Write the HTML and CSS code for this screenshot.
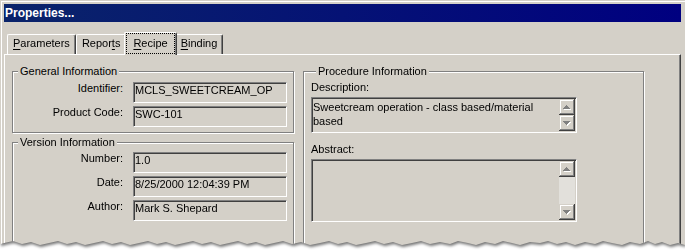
FILE: index.html
```html
<!DOCTYPE html>
<html>
<head>
<meta charset="utf-8">
<title>Properties</title>
<link rel="stylesheet" href="styles.css">
</head>
<body>
<div class="shot">
  <div class="window">
    <div class="titlebar">Properties...</div>
    <div class="tabs">
      <div class="tab"><u>P</u>arameters</div>
      <div class="tab">Repor<u>t</u>s</div>
      <div class="tab active"><span class="focus"><u>R</u>ecipe</span></div>
      <div class="tab"><u>B</u>inding</div>
    </div>
    <div class="panel">
      <div class="col-left">
        <fieldset class="group general">
          <legend>General Information</legend>
          <div class="fields">
            <div class="label">Identifier:</div>
            <div class="field">MCLS_SWEETCREAM_OP</div>
            <div class="label">Product Code:</div>
            <div class="field">SWC-101</div>
          </div>
        </fieldset>
        <fieldset class="group version">
          <legend>Version Information</legend>
          <div class="fields">
            <div class="label">Number:</div>
            <div class="field">1.0</div>
            <div class="label">Date:</div>
            <div class="field">8/25/2000 12:04:39 PM</div>
            <div class="label">Author:</div>
            <div class="field">Mark S. Shepard</div>
          </div>
        </fieldset>
      </div>
      <fieldset class="group procedure">
        <legend>Procedure Information</legend>
        <div class="caption">Description:</div>
        <div class="memo memo-desc">
          <div class="memo-text">Sweetcream operation - class based/material based</div>
          <div class="scrollbar">
            <div class="sbtn"><svg width="8" height="5" viewBox="0 0 8 5" shape-rendering="crispEdges"><path transform="translate(1 1)" fill="#fff" d="M3 0h1v1h1v1h1v1h1v1H0V3h1V2h1V1h1z"/><path fill="#808080" d="M3 0h1v1h1v1h1v1h1v1H0V3h1V2h1V1h1z"/></svg></div>
            <div class="sbtn"><svg width="8" height="5" viewBox="0 0 8 5" shape-rendering="crispEdges"><path transform="translate(1 1)" fill="#fff" d="M0 0h7v1H6v1H5v1H4v1H3V3H2V2H1V1H0z"/><path fill="#808080" d="M0 0h7v1H6v1H5v1H4v1H3V3H2V2H1V1H0z"/></svg></div>
          </div>
        </div>
        <div class="caption caption-gap">Abstract:</div>
        <div class="memo memo-abstract">
          <div class="memo-text"></div>
          <div class="scrollbar">
            <div class="sbtn"><svg width="8" height="5" viewBox="0 0 8 5" shape-rendering="crispEdges"><path transform="translate(1 1)" fill="#fff" d="M3 0h1v1h1v1h1v1h1v1H0V3h1V2h1V1h1z"/><path fill="#808080" d="M3 0h1v1h1v1h1v1h1v1H0V3h1V2h1V1h1z"/></svg></div>
            <div class="track"></div>
            <div class="sbtn"><svg width="8" height="5" viewBox="0 0 8 5" shape-rendering="crispEdges"><path transform="translate(1 1)" fill="#fff" d="M0 0h7v1H6v1H5v1H4v1H3V3H2V2H1V1H0z"/><path fill="#808080" d="M0 0h7v1H6v1H5v1H4v1H3V3H2V2H1V1H0z"/></svg></div>
          </div>
        </div>
      </fieldset>
    </div>
  </div>
</div>
</body>
</html>
```

FILE: styles.css
```css
* { box-sizing: border-box; }

html, body {
  margin: 0;
  background: #fff;
}

body {
  font-family: "Liberation Sans", Arial, sans-serif;
  font-size: 11px;
  color: #000;
}

.shot {
  width: 685px;
  height: 250px;
  filter: drop-shadow(1px 2px 1.5px rgba(0, 0, 0, 0.55));
}

.window {
  width: 685px;
  height: 250px;
  background: #d4d0c8;
  padding: 4px 4px 0;
  display: flex;
  flex-direction: column;
  box-shadow: inset 1px 1px 0 #d4d0c8, inset 2px 2px 0 #fff;
  clip-path: polygon(0 0, 685px 0, 685px 245px, 678px 243px, 670px 245px, 662px 242px, 655px 244px, 648px 241px, 640px 244px, 630px 242px, 622px 245px, 612px 243px, 603px 241px, 595px 244px, 585px 242px, 575px 245px, 566px 242px, 557px 244px, 548px 241px, 540px 243px, 530px 242px, 520px 245px, 512px 243px, 503px 241px, 495px 244px, 485px 242px, 476px 245px, 468px 243px, 458px 241px, 450px 244px, 440px 242px, 430px 244px, 421px 241px, 412px 243px, 402px 245px, 393px 242px, 384px 244px, 375px 241px, 366px 243px, 356px 245px, 347px 242px, 338px 244px, 329px 241px, 320px 243px, 310px 245px, 301px 242px, 292px 244px, 283px 241px, 274px 243px, 265px 245px, 256px 242px, 247px 244px, 238px 241px, 229px 243px, 220px 245px, 211px 242px, 202px 244px, 193px 241px, 184px 243px, 175px 245px, 166px 242px, 157px 244px, 148px 241px, 139px 243px, 130px 245px, 121px 242px, 112px 244px, 103px 241px, 94px 243px, 85px 245px, 76px 242px, 67px 244px, 58px 241px, 49px 243px, 40px 245px, 31px 242px, 22px 244px, 13px 241px, 4px 243px, 0 244px);
}

.titlebar {
  flex: none;
  height: 18px;
  background: linear-gradient(90deg, #0a246a, #000080);
  color: #fff;
  font-weight: bold;
  font-size: 12px;
  line-height: 18px;
  padding-left: 1px;
  white-space: nowrap;
}

/* ---------- tabs ---------- */
.tabs {
  flex: none;
  display: flex;
  align-items: flex-end;
  height: 22px;
  margin-top: 10px;
  padding-left: 3px;
  position: relative;
  z-index: 1;
}

.tab {
  height: 20px;
  padding: 2px 5px 0;
  border: 1px solid #fff;
  border-bottom: 0;
  border-right-color: #404040;
  border-radius: 2px 2px 0 0;
  box-shadow: inset -1px 0 0 #808080;
  line-height: 13px;
  white-space: nowrap;
  background: #d4d0c8;
}

.tab u {
  text-underline-offset: 2px;
}

.tab.active {
  position: relative;
  z-index: 2;
  height: 23px;
  margin: 0 -2px -1px;
  padding: 0 1px;
}

.focus {
  display: block;
  height: 21px;
  border: 1px dotted #000;
  padding: 3px 6px 0;
}

/* ---------- panel ---------- */
.panel {
  flex: 1;
  border-top: 1px solid #fff;
  border-left: 1px solid #fff;
  border-right: 1px solid #404040;
  box-shadow: inset -1px 0 0 #808080;
  padding: 10px 0 0 7px;
  display: grid;
  grid-template-columns: 282px 341px;
  column-gap: 9px;
  align-items: stretch;
}

.col-left {
  display: flex;
  flex-direction: column;
  gap: 3px;
}

.group {
  margin: 0;
  min-width: 0;
  padding: 0;
  border: 1px solid #808080;
  box-shadow: inset 1px 1px 0 #fff, 1px 1px 0 #fff;
}

.group legend {
  margin-left: 5px;
  padding: 0 2px;
  line-height: 13px;
  background: #d4d0c8;
  white-space: nowrap;
}

.general {
  padding: 4px 6px 5px 0;
}

.version {
  flex: 1;
  padding: 3px 6px 0 0;
}

.procedure {
  padding: 3px 0 0 7px;
}

.fields {
  display: grid;
  grid-template-columns: 110px 154px;
  column-gap: 10px;
  row-gap: 3px;
}

.label {
  text-align: right;
  line-height: 13px;
  white-space: nowrap;
}

.field {
  height: 21px;
  padding: 1px 1px;
  line-height: 13px;
  white-space: nowrap;
  overflow: hidden;
  border: 1px solid;
  border-color: #808080 #fff #fff #808080;
  box-shadow: inset 1px 1px 0 #404040, inset -1px -1px 0 #d4d0c8;
}

/* ---------- memo fields ---------- */
.caption {
  line-height: 13px;
}

.caption-gap {
  margin-top: 10px;
}

.memo {
  display: flex;
  width: 266px;
  margin-top: 3px;
  padding: 1px;
  border: 1px solid;
  border-color: #808080 #fff #fff #808080;
  box-shadow: inset 1px 1px 0 #404040, inset -1px -1px 0 #d4d0c8;
}

.memo-desc { height: 36px; }
.memo-abstract { height: 63px; }

.memo-text {
  flex: 1;
  padding: 1px 0 0 0;
  line-height: 14px;
}

.scrollbar {
  width: 16px;
  display: flex;
  flex-direction: column;
}

.sbtn {
  flex: none;
  height: 16px;
  background: #d4d0c8;
  box-shadow: inset -1px -1px 0 #404040, inset 1px 1px 0 #d4d0c8, inset -2px -2px 0 #808080, inset 2px 2px 0 #fff;
  display: flex;
  align-items: center;
  justify-content: center;
}

.sbtn svg {
  display: block;
}

.track {
  flex: 1;
  background: #e2e0db;
}
```
